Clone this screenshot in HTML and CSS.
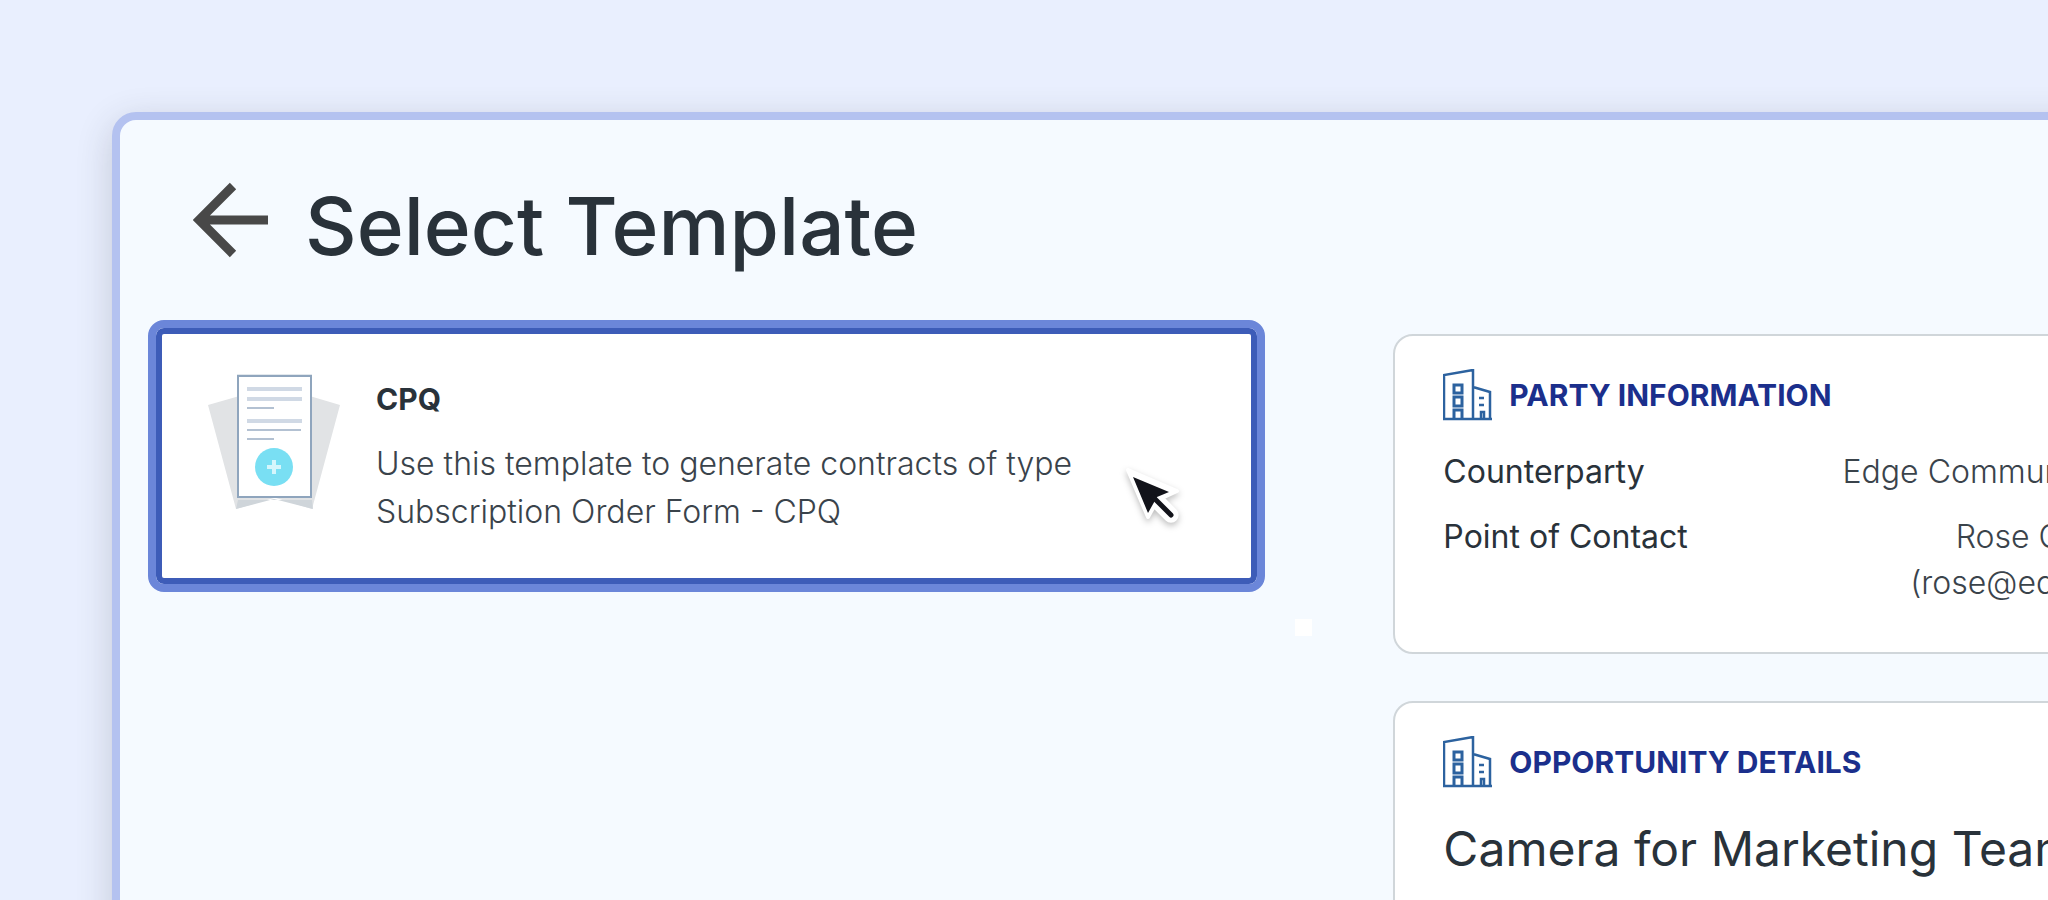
FILE: index.html
```
<!DOCTYPE html>
<html lang="en">
<head>
<meta charset="utf-8">
<meta name="viewport" content="width=device-width, initial-scale=1">
<title>Select Template</title>
<link rel="stylesheet" href="styles.css">
</head>
<body>

<!-- building icon, shared by the info cards -->
<svg class="defs" width="0" height="0" aria-hidden="true">
<symbol id="building" viewBox="0 0 50 52">
<path d="M1 50V6L30 1v49M30 18l17 5v27M0 50h49" fill="none" stroke="#2c629f" stroke-width="2.5"/>
<path d="M11 16h8v8h-8zM11 28h8v9h-8zM11 50v-9h8v9" fill="none" stroke="#2c629f" stroke-width="3"/>
<path d="M36 29h5M36 36h5M38 50v-7h3v7" fill="none" stroke="#2c629f" stroke-width="2.5"/>
</symbol>
</svg>

<main class="window">
<header class="header">
<button class="back" type="button" aria-label="Back">
<svg width="76" height="76" viewBox="0 0 76 76"><path d="M75 38H8M40 4L6 38l34 34" fill="none" stroke="#484848" stroke-width="9"/></svg>
</button>
<h1>Select Template</h1>
</header>

<div class="columns">
<section class="templates">
<button class="template" type="button">
<svg class="docs" width="134" height="136" viewBox="0 0 134 136">
<path d="M0 31L66 12v112L28 135zM132 31L68 12v112l36 11z" fill="#e1e3e5"/>
<path d="M30 126h74l1 9-39-10-38 10z" fill="#cfd5da"/>
<path d="M29 0h75" stroke="#e2e8ed" stroke-width="2"/>
<path d="M30 2h73v121H30z" fill="#fff" stroke="#8fa5bd" stroke-width="2"/>
<path d="M39 15h55M39 25h55M39 47h55" stroke="#d0d9e5" stroke-width="4"/>
<path d="M39 34h27M39 56h54M39 65h27" stroke="#b3c1d2" stroke-width="2"/>
<circle cx="66" cy="93" r="19" fill="#79dff3"/>
<path d="M66 86v14M59 93h14" stroke="#d5f6fc" stroke-width="4"/>
</svg>
<span class="template-text">
<strong>CPQ</strong>
<span class="desc">Use this template to generate contracts of type Subscription Order Form - CPQ</span>
</span>
<svg class="cursor" width="56" height="60" viewBox="0 0 56 60">
<path d="M3 3L23 50l6-11 13 13a5 5 0 0 0 8-8L37 31l15-7z" fill="#fff" stroke="#fff" stroke-width="4" stroke-linejoin="round"/>
<path d="M8 10l36 15-12 5L23 46z" fill="#12131a"/>
<path d="M28 30l18 18" stroke="#12131a" stroke-width="5" stroke-linecap="round"/>
</svg>
</button>
<span class="handle"></span>
</section>

<aside class="details">
<section class="card">
<h2><svg width="50" height="52"><use href="#building"/></svg>PARTY INFORMATION</h2>
<dl>
<div><dt>Counterparty</dt><dd>Edge Communications</dd></div>
<div><dt>Point of Contact</dt><dd>Rose Gonzalez<br>(rose@edge.com)</dd></div>
</dl>
</section>

<section class="card">
<h2><svg width="50" height="52"><use href="#building"/></svg>OPPORTUNITY DETAILS</h2>
<p class="name">Camera for Marketing Team</p>
</section>
</aside>
</div>
</main>

</body>
</html>
```
FILE: styles.css
```
* {box-sizing: border-box;}
html {height: 100%; overflow: hidden;}
body {margin: 0; min-height: 100%; padding: 112px 0 0 112px; background: #e9effe; color: #29323a; font-family: Inter, "Liberation Sans", sans-serif; font-size: 32px; line-height: 46px; overflow: hidden;}
button {font: inherit; color: inherit; text-align: left; border: 0; padding: 0; background: none; cursor: pointer;}
h1, h2, dl, dd, p {margin: 0;}
.defs {position: absolute;}

/* the window runs off the right and bottom edges of the page */
.window {margin-right: -194px; min-height: calc(100vh - 112px); padding: 52px 28px; background: #f5faff; border: 8px solid #b4c2f0; border-radius: 24px; box-shadow: 0 10px 36px rgba(50, 50, 60, 0.2);}

.header {display: flex; align-items: center; gap: 36px; height: 96px; padding-left: 45px; margin-bottom: 52px;}
.back {display: flex;}
h1 {font-size: 80px; line-height: 96px; font-weight: 500; padding-top: 12px;}

.columns {display: grid; grid-template-columns: 11fr 8fr; gap: 128px; align-items: start;}
.templates {position: relative;}
.template {position: relative; display: flex; gap: 34px; width: 100%; height: 272px; padding: 46px 52px; background: #fff; border: 8px solid #6b86d9; border-radius: 16px; box-shadow: inset 0 0 0 6px #3d5cb8;}
.docs {flex: none;}
.template-text {display: flex; flex-direction: column; gap: 18px; padding-top: 2px;}
.template-text strong {font-size: 30px; font-weight: 700;}
.desc {color: #3a434b; font-weight: 300; line-height: 48px;}
.cursor {position: absolute; right: 76px; bottom: 57px; filter: drop-shadow(0 3px 3px rgba(0, 0, 0, 0.25));}
.handle {position: absolute; right: -47px; bottom: -44px; width: 17px; height: 17px; background: #fff;}

.details {display: grid; gap: 47px; padding-top: 14px;}
.card {min-height: 320px; padding: 33px 26px 32px 48px; background: #fff; border: 2px solid #d0d6da; border-radius: 20px;}
h2 {display: flex; align-items: center; gap: 16px; color: #1b2f8c; font-size: 30px; line-height: 52px; font-weight: 700;}
dl {display: grid; gap: 19px; margin-top: 28px;}
dl div {display: flex; justify-content: space-between;}
dt {font-weight: 400;}
dd {color: #3a434b; text-align: right; font-weight: 300;}
.name {margin-top: 33px; font-size: 48px; line-height: 56px;}
```
